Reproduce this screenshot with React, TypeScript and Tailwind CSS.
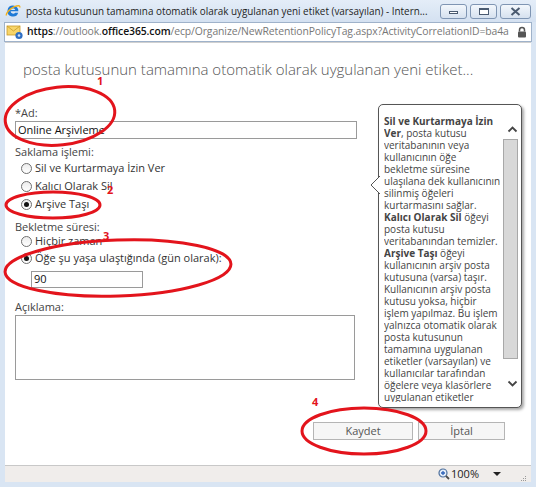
import React from 'react';

const FONT = { fontFamily: '"Open Sans", "Noto Sans", sans-serif' };

function IeIcon() {
  return (
    <svg width="16" height="16" viewBox="0 0 16 16">
      <path d="M8 2.5a5.5 5.5 0 1 0 5.2 7.2h-3a2.6 2.6 0 0 1-4.6-1.4h7.8A5.5 5.5 0 0 0 8 2.5zm-2.3 4.4a2.4 2.4 0 0 1 4.6 0z" fill="#1f7ad6" />
      <path d="M1.5 12.5c-1-2 3-6.5 8-8.8 3.6-1.6 5.8-1.3 5.2.8" fill="none" stroke="#f2b21f" strokeWidth="1.4" />
    </svg>
  );
}

function MailIcon() {
  return (
    <svg width="18" height="16" viewBox="0 0 18 16">
      <rect x="1" y="2" width="13" height="9" fill="#f7d56a" stroke="#c89a2a" strokeWidth="0.8" />
      <path d="M1 2l6.5 5 6.5-5" fill="none" stroke="#c89a2a" strokeWidth="0.8" />
      <circle cx="13" cy="11.5" r="3.6" fill="#2f6fc4" />
      <circle cx="13" cy="11.5" r="1.3" fill="#cfe0f6" />
    </svg>
  );
}

function WinButton({ kind, wide }: { kind: 'min' | 'max' | 'close'; wide?: boolean }) {
  return (
    <div
      className={`h-[15px] ${wide ? 'w-[31px]' : 'w-[27px]'} rounded-[3px] border border-[#7f95b3] bg-gradient-to-b from-[#f3f7fc] to-[#d6e1ef] flex items-center justify-center`}
    >
      {kind === 'min' && <div className="w-[9px] h-[3px] border border-[#4a5a70] bg-white mt-[2px]" />}
      {kind === 'max' && <div className="w-[10px] h-[7px] border border-[#4a5a70] border-t-2 bg-white" />}
      {kind === 'close' && (
        <svg width="11" height="9" viewBox="0 0 11 9">
          <path d="M1.5 1l8 7M9.5 1l-8 7" stroke="#4a5a70" strokeWidth="2" />
        </svg>
      )}
    </div>
  );
}

function Radio({ checked, label }: { checked?: boolean; label: string }) {
  return (
    <div className="flex items-center h-full">
      <div className="w-[11px] h-[11px] rounded-full border border-[#6f6f6f] bg-gradient-to-b from-[#ececec] to-white flex items-center justify-center ml-[6px] mr-[3px]">
        {checked && <div className="w-[5px] h-[5px] rounded-full bg-[#111]" />}
      </div>
      <span className="text-[11px] text-[#333]">{label}</span>
    </div>
  );
}

const CALLOUT: React.ReactNode[] = [
  <b key="a">Sil ve Kurtarmaya İzin</b>,
  <><b>Ver</b>, posta kutusu</>,
  'veritabanının veya',
  'kullanıcının öğe',
  'bekletme süresine',
  'ulaşılana dek kullanıcının',
  'silinmiş öğeleri',
  'kurtarmasını sağlar.',
  <><b>Kalıcı Olarak Sil</b> öğeyi</>,
  'posta kutusu',
  'veritabanından temizler.',
  <><b>Arşive Taşı</b> öğeyi</>,
  'kullanıcının arşiv posta',
  'kutusuna (varsa) taşır.',
  'Kullanıcının arşiv posta',
  'kutusu yoksa, hiçbir',
  'işlem yapılmaz. Bu işlem',
  'yalnızca otomatik olarak',
  'posta kutusunun',
  'tamamına uygulanan',
  'etiketler (varsayılan) ve',
  'kullanıcılar tarafından',
  'öğelere veya klasörlere',
  'uygulanan etiketler',
];

function Callout() {
  return (
    <div className="absolute left-[373px] top-[61px] w-[144px] h-[304px] rounded-[5px] border border-[#555] bg-white shadow-[2px_2px_3px_rgba(0,0,0,0.35)]">
      <svg className="absolute left-[-9px] top-[70px]" width="10" height="20" viewBox="0 0 10 20">
        <path d="M10 1L1 10l9 9" fill="white" stroke="#555" strokeWidth="1" />
      </svg>
      <div className="absolute left-[5px] top-[10px] w-[134px] h-[287px] overflow-hidden text-[10px] leading-[12px] text-[#444] whitespace-nowrap">
        {CALLOUT.map((l, i) => (
          <div key={i}>{l}</div>
        ))}
      </div>
      <svg className="absolute left-[128px] top-[20px]" width="11" height="8" viewBox="0 0 11 8">
        <path d="M1.5 6.5l4-4 4 4" fill="none" stroke="#444" strokeWidth="1.8" />
      </svg>
      <div className="absolute left-[124px] top-[34px] w-[15px] h-[220px] bg-[#d8d8d8] border border-[#a8a8a8]" />
      <svg className="absolute left-[128px] top-[275px]" width="11" height="8" viewBox="0 0 11 8">
        <path d="M1.5 1.5l4 4 4-4" fill="none" stroke="#444" strokeWidth="1.8" />
      </svg>
    </div>
  );
}

function Annotations() {
  const red = '#e3141c';
  return (
    <>
      <svg className="absolute inset-0 pointer-events-none" width="536" height="487">
        <ellipse cx="60" cy="116" rx="55" ry="29" transform="rotate(-6 60 116)" fill="none" stroke={red} strokeWidth="3" />
        <ellipse cx="53" cy="205" rx="47" ry="13" fill="none" stroke={red} strokeWidth="3" />
        <ellipse cx="118" cy="268" rx="113" ry="28" transform="rotate(-2 118 268)" fill="none" stroke={red} strokeWidth="3" />
        <ellipse cx="364" cy="431" rx="62" ry="23" fill="none" stroke={red} strokeWidth="3" />
      </svg>
      <span className="absolute left-[97px] top-[73px] text-[11px] font-bold text-[#e3141c]">1</span>
      <span className="absolute left-[107px] top-[182px] text-[11px] font-bold text-[#e3141c]">2</span>
      <span className="absolute left-[103px] top-[228px] text-[11px] font-bold text-[#e3141c]">3</span>
      <span className="absolute left-[312px] top-[394px] text-[11px] font-bold text-[#e3141c]">4</span>
    </>
  );
}

export default function App() {
  return (
    <div className="relative w-[536px] h-[487px] bg-[#d9e5f3] flex flex-col overflow-hidden" style={FONT}>
      {/* title bar */}
      <div className="h-[22px] flex items-center pl-[5px] pr-[5px] bg-gradient-to-b from-[#e4edf8] to-[#d4e1f1]">
        <IeIcon />
        <span className="ml-[5px] text-[9.9px] text-[#1e1e1e] whitespace-nowrap flex-1 overflow-hidden">
          posta kutusunun tamamına otomatik olarak uygulanan yeni etiket (varsayılan) - Intern...
        </span>
        <div className="flex gap-[3px] ml-[6px]">
          <WinButton kind="min" />
          <WinButton kind="max" />
          <WinButton kind="close" wide />
        </div>
      </div>

      {/* address bar */}
      <div className="h-[20px] mx-[4px] bg-white border border-[#9fb2ca] flex items-center pl-[1px] pr-[4px]">
        <MailIcon />
        <span className="ml-[3px] text-[10.4px] whitespace-nowrap flex-1 overflow-hidden tracking-[-0.1px]">
          <span className="text-[#111] font-semibold">https</span>
          <span className="text-[#777]">://outlook.</span>
          <span className="text-[#111] font-semibold">office365.com</span>
          <span className="text-[#777]">/ecp/Organize/NewRetentionPolicyTag.aspx?ActivityCorrelationID=ba4a</span>
        </span>
        <svg className="shrink-0 ml-[4px]" width="10" height="12" viewBox="0 0 10 12">
          <path d="M2.5 5.5V4a2.5 2.5 0 0 1 5 0v1.5" fill="none" stroke="#555" strokeWidth="1.5" />
          <rect x="1" y="5.5" width="8" height="6" rx="1" fill="#555" />
        </svg>
      </div>

      {/* page content */}
      <div className="relative mx-[5px] h-[423px] bg-white border-t border-[#d0d0d0]">
        <div className="pl-[10px] flex flex-col">
          <div className="mt-[16px] pl-[8px] h-[20px] leading-[20px] text-[15px] text-[#555] font-light whitespace-nowrap">
            posta kutusunun tamamına otomatik olarak uygulanan yeni etiket...
          </div>

          <div className="mt-[27px] h-[14px] leading-[14px] text-[11px] text-[#444]">*Ad:</div>
          <div className="mt-[1px] w-[342px] h-[18px] border border-[#9a9a9a] flex items-center px-[2px] text-[11px] text-[#111]">
            Online Arşivleme
          </div>

          <div className="mt-[6px] h-[14px] leading-[14px] text-[11px] text-[#444]">Saklama işlemi:</div>
          <div className="h-[18px]"><Radio label="Sil ve Kurtarmaya İzin Ver" /></div>
          <div className="h-[18px]"><Radio label="Kalıcı Olarak Sil" /></div>
          <div className="h-[18px]"><Radio checked label="Arşive Taşı" /></div>

          <div className="mt-[8px] h-[12px] leading-[12px] text-[11px] text-[#444]">Bekletme süresi:</div>
          <div className="h-[17px]"><Radio label="Hiçbir zaman" /></div>
          <div className="h-[17px]"><Radio checked label="Öğe şu yaşa ulaştığında (gün olarak):" /></div>
          <div className="mt-[4px] ml-[16px] w-[112px] h-[17px] border border-[#9a9a9a] flex items-center px-[2px] text-[11px] text-[#111]">
            90
          </div>

          <div className="mt-[13px] h-[12px] leading-[12px] text-[11px] text-[#444]">Açıklama:</div>
          <div className="mt-[2px] w-[340px] h-[65px] border border-[#9a9a9a]" />

          <div className="mt-[42px] flex justify-end gap-[5px] pr-[26px]">
            <button className="w-[100px] h-[18px] border border-[#b5b5b5] bg-[#f6f6f6] text-[11px] text-[#555] leading-[16px]">
              Kaydet
            </button>
            <button className="w-[87px] h-[18px] border border-[#b5b5b5] bg-[#f6f6f6] text-[11px] text-[#555] leading-[16px]">
              İptal
            </button>
          </div>
        </div>

        <Callout />
      </div>

      {/* status bar */}
      <div className="mx-[5px] h-[17px] bg-[#f0edeb] border-t border-[#c8c8c8] flex items-center justify-end pr-[4px]">
        <svg width="12" height="12" viewBox="0 0 12 12">
          <circle cx="5" cy="5" r="4" fill="#e4eefa" stroke="#4d6f9c" strokeWidth="1.2" />
          <path d="M3 5h4M5 3v4" stroke="#2f63b8" strokeWidth="1.3" />
          <path d="M8 8l3 3" stroke="#4d4d4d" strokeWidth="1.8" />
        </svg>
        <span className="ml-[1px] text-[11px] text-[#222]">100%</span>
        <svg className="ml-[14px]" width="8" height="5" viewBox="0 0 8 5">
          <path d="M0 0h8L4 4z" fill="#222" />
        </svg>
        <svg className="ml-[20px] self-end" width="6" height="6" viewBox="0 0 6 6">
          <rect x="4" y="0" width="1" height="1" fill="#999" />
          <rect x="2" y="2" width="1" height="1" fill="#999" />
          <rect x="4" y="2" width="1" height="1" fill="#999" />
          <rect x="0" y="4" width="1" height="1" fill="#999" />
          <rect x="2" y="4" width="1" height="1" fill="#999" />
          <rect x="4" y="4" width="1" height="1" fill="#999" />
        </svg>
      </div>

      <Annotations />
    </div>
  );
}
